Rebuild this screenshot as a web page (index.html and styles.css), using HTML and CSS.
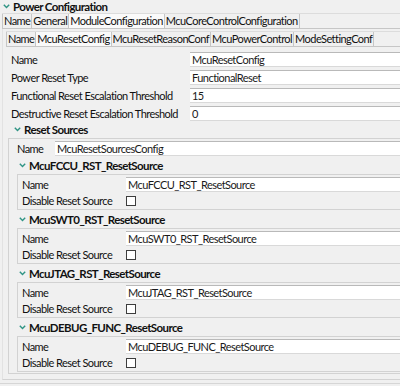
FILE: index.html
```html
<!DOCTYPE html>
<html lang="en">
<head>
  <meta charset="UTF-8" />
  <title>Power Configuration</title>
  <link rel="stylesheet" href="styles.css">
</head>
<body>
  <div class="page">
    <div class="title">
      <svg class="chevron" width="7" height="5" viewBox="0 0 7 5"><path d="M0.8 0.8 L3.5 3.6 L6.2 0.8" /></svg>
      Power Configuration
    </div>

    <div class="editor">
      <div class="tabs tabs-outer">
        <div class="tab">Name</div>
        <div class="tab">General</div>
        <div class="tab active">ModuleConfiguration</div>
        <div class="tab">McuCoreControlConfiguration</div>
      </div>

      <div class="tab-body">
        <div class="tabs tabs-inner">
          <div class="tab">Name</div>
          <div class="tab active">McuResetConfig</div>
          <div class="tab">McuResetReasonConf</div>
          <div class="tab">McuPowerControl</div>
          <div class="tab">ModeSettingConf</div>
        </div>

        <div class="form">
          <div class="row top-row"><label>Name</label><div class="field">McuResetConfig</div></div>
          <div class="row top-row"><label>Power Reset Type</label><div class="field">FunctionalReset</div></div>
          <div class="row top-row"><label>Functional Reset Escalation Threshold</label><div class="field">15</div></div>
          <div class="row top-row"><label>Destructive Reset Escalation Threshold</label><div class="field">0</div></div>

          <div class="section-title sources-title">
            <svg class="chevron" width="7" height="5" viewBox="0 0 7 5"><path d="M0.8 0.8 L3.5 3.6 L6.2 0.8" /></svg>
            Reset Sources
          </div>

          <div class="box sources">
            <div class="row sources-row"><label>Name</label><div class="field">McuResetSourcesConfig</div></div>

            <div class="section-title">
              <svg class="chevron" width="7" height="5" viewBox="0 0 7 5"><path d="M0.8 0.8 L3.5 3.6 L6.2 0.8" /></svg>
              McuFCCU_RST_ResetSource
            </div>
            <div class="box source">
              <div class="row"><label>Name</label><div class="field">McuFCCU_RST_ResetSource</div></div>
              <div class="row"><label>Disable Reset Source</label><span class="checkbox"></span></div>
            </div>

            <div class="section-title">
              <svg class="chevron" width="7" height="5" viewBox="0 0 7 5"><path d="M0.8 0.8 L3.5 3.6 L6.2 0.8" /></svg>
              McuSWT0_RST_ResetSource
            </div>
            <div class="box source">
              <div class="row"><label>Name</label><div class="field">McuSWT0_RST_ResetSource</div></div>
              <div class="row"><label>Disable Reset Source</label><span class="checkbox"></span></div>
            </div>

            <div class="section-title">
              <svg class="chevron" width="7" height="5" viewBox="0 0 7 5"><path d="M0.8 0.8 L3.5 3.6 L6.2 0.8" /></svg>
              McuJTAG_RST_ResetSource
            </div>
            <div class="box source">
              <div class="row"><label>Name</label><div class="field">McuJTAG_RST_ResetSource</div></div>
              <div class="row"><label>Disable Reset Source</label><span class="checkbox"></span></div>
            </div>

            <div class="section-title">
              <svg class="chevron" width="7" height="5" viewBox="0 0 7 5"><path d="M0.8 0.8 L3.5 3.6 L6.2 0.8" /></svg>
              McuDEBUG_FUNC_ResetSource
            </div>
            <div class="box source">
              <div class="row"><label>Name</label><div class="field">McuDEBUG_FUNC_ResetSource</div></div>
              <div class="row"><label>Disable Reset Source</label><span class="checkbox"></span></div>
            </div>
          </div>
        </div>
      </div>
    </div>
  </div>
</body>
</html>
```
FILE: styles.css
```css
:root {
  --bg: #f0f0f0;
  --line: #d2d2d2;
  --tab-line: #c6c6c6;
  --teal: #2f9484;
  --text: #111111;
}

* {
  margin: 0;
  padding: 0;
  box-sizing: border-box;
}

body {
  background: var(--bg);
  color: var(--text);
  font-family: 'Lato', sans-serif;
  font-size: 11px;
  letter-spacing: -0.55px;
  overflow: hidden;
}

.page {
  width: 400px;
  height: 386px;
  overflow: hidden;
}

.chevron {
  fill: none;
  stroke: var(--teal);
  stroke-width: 1.4;
  flex: none;
}

/* Header */
.title {
  display: flex;
  align-items: center;
  gap: 3px;
  height: 13px;
  padding-left: 3px;
  font-weight: 700;
  font-size: 11.5px;
  letter-spacing: -0.6px;
}

.editor {
  padding-bottom: 3px;
  border-bottom: 1px solid #d6d6d6;
}

/* Tabs */
.tabs {
  display: flex;
  height: 16px;
  border-top: 1px solid #dcdcdc;
  border-bottom: 1px solid var(--tab-line);
}

.tab {
  padding: 0 1px;
  line-height: 14px;
  border-left: 1px solid var(--tab-line);
  white-space: nowrap;
}

.tab:last-child {
  border-right: 1px solid var(--tab-line);
}

.tab.active {
  background: #fafafa;
}

.tabs-outer {
  margin-left: 2px;
}

.tab-body {
  margin-left: 2px;
  padding: 2px 0 5px 3px;
  border-left: 1px solid #e2e2e2;
  border-bottom: 1px solid var(--line);
}

/* Form rows */
.form {
  padding-top: 2px;
}

.row {
  display: flex;
  align-items: center;
  height: 15px;
  white-space: nowrap;
}

.row label {
  flex: none;
}

.top-row {
  margin-top: 3px;
  padding-left: 5px;
}

.top-row label {
  width: 179px;
}

.field {
  flex: 1;
  height: 15px;
  line-height: 13px;
  padding-left: 2px;
  background: #ffffff;
  border-top: 1px solid #b9b9b9;
  border-bottom: 1px solid #d9d9d9;
  color: #1a1a1a;
}

.checkbox {
  width: 10px;
  height: 10px;
  background: #ffffff;
  border: 1px solid #3d3d3d;
}

/* Sections */
.section-title {
  display: flex;
  align-items: center;
  gap: 3px;
  height: 14px;
  margin-top: 2px;
  padding-left: 2px;
  font-weight: 700;
  font-size: 11.5px;
  letter-spacing: -0.6px;
  white-space: nowrap;
}

.sources-title {
  margin-top: 1px;
  padding-left: 8px;
}

.box {
  border: 1px solid var(--line);
  border-right: none;
}

.sources {
  margin: 2px 0 0 2px;
  padding: 2px 0 1px 8px;
}

.sources-row label {
  width: 38px;
}

.source {
  margin-top: 2px;
  padding: 2px 0 1px 4px;
  display: flex;
  flex-direction: column;
  gap: 1px;
}

.source .row label {
  width: 104px;
}
```
